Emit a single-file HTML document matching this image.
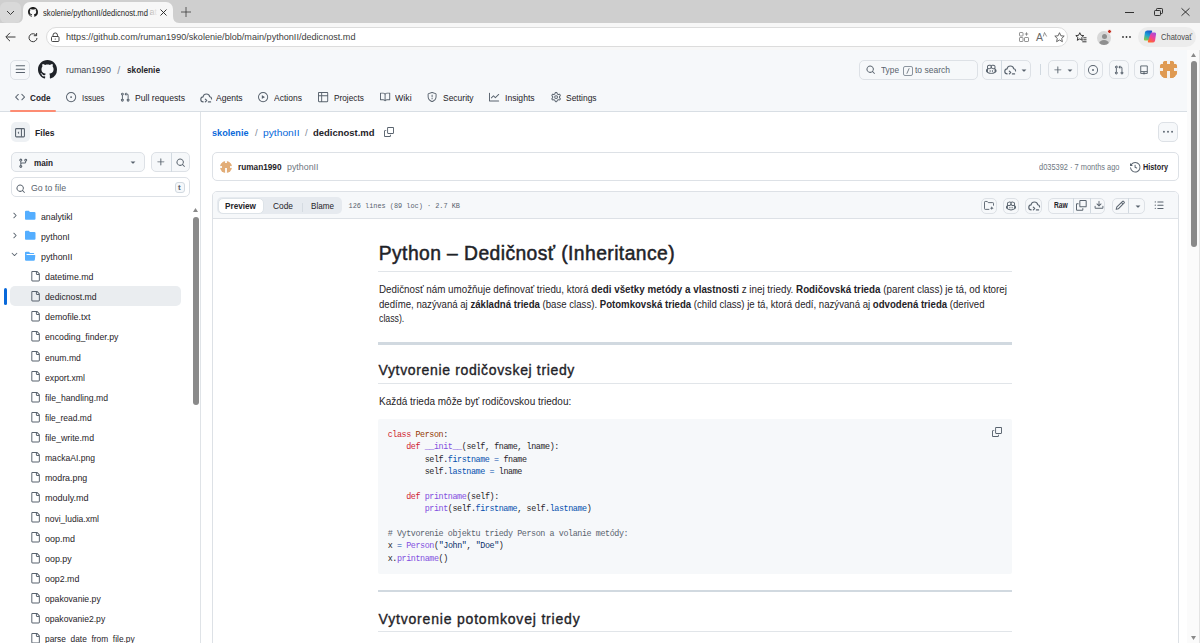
<!DOCTYPE html>
<html><head><meta charset="utf-8">
<style>
*{box-sizing:border-box;margin:0;padding:0}
html,body{width:1200px;height:643px;overflow:hidden;background:#fff;font-family:"Liberation Sans",sans-serif;color:#1f2328}
.a{position:absolute}
.t{position:absolute;white-space:nowrap;line-height:1}
svg{position:absolute;display:block;overflow:visible}
</style></head><body>

<div class="a" style="left:0px;top:0px;width:1200px;height:23px;background:#cfcfcf;"></div>
<div class="a" style="left:0px;top:2px;width:21px;height:21px;background:#d9d9d9;border-radius:6px;"></div>
<svg style="left:6px;top:9.5px" width="9" height="6"><path d="M1 1L4.5 4.5L8 1" stroke="#3a3a3a" stroke-width="1" fill="none"/></svg>
<div class="a" style="left:22.5px;top:2px;width:150px;height:24px;background:#f7f7f7;border-radius:0px;border-radius:7px 7px 0 0"></div>
<svg style="left:16.5px;top:16px" width="6" height="7"><path d="M6 7H0Q6 7 6 0Z" fill="#f7f7f7"/></svg>
<svg style="left:172.5px;top:16px" width="6" height="7"><path d="M0 0V7H6Q0 7 0 0Z" fill="#f7f7f7"/></svg>
<svg style="left:27.5px;top:7px" width="10" height="10" viewBox="0 0 16 16"><path d="M8 0C3.58 0 0 3.58 0 8c0 3.54 2.29 6.53 5.47 7.59.4.07.55-.17.55-.38 0-.19-.01-.82-.01-1.49-2.01.37-2.53-.49-2.69-.94-.09-.23-.48-.94-.82-1.13-.28-.15-.68-.52-.01-.53.63-.01 1.08.58 1.23.82.72 1.21 1.87.87 2.33.66.07-.52.28-.87.51-1.07-1.78-.2-3.64-.89-3.64-3.95 0-.87.31-1.59.82-2.15-.08-.2-.36-1.02.08-2.12 0 0 .67-.21 2.2.82.64-.18 1.32-.27 2-.27.68 0 1.36.09 2 .27 1.53-1.04 2.2-.82 2.2-.82.44 1.1.16 1.92.08 2.12.51.56.82 1.27.82 2.15 0 3.07-1.87 3.75-3.65 3.95.29.25.54.73.54 1.48 0 1.07-.01 1.93-.01 2.2 0 .21.15.46.55.38A8.013 8.013 0 0016 8c0-4.42-3.58-8-8-8z" fill="#1f1f1f"/></svg>
<div class="t" style="left:42.5px;top:7.84px;font-size:9.4px;font-weight:normal;color:#262626;letter-spacing:0.000px;font-family:'Liberation Sans';transform:scaleX(0.8156);transform-origin:0 0;">skolenie/pythonII/dedicnost.md</div>
<div class="t" style="left:149.5px;top:8.01px;font-size:9.2px;font-weight:normal;color:#b5b5b5;letter-spacing:0.000px;font-family:'Liberation Sans';">at</div>
<div class="a" style="left:151px;top:5px;width:7px;height:14px;background:linear-gradient(90deg,rgba(247,247,247,0),#f7f7f7);"></div>
<svg style="left:160px;top:9px" width="7" height="7"><path d="M0.5 0.5L6.5 6.5M6.5 0.5L0.5 6.5" stroke="#1f1f1f" stroke-width="0.9"/></svg>
<svg style="left:181px;top:7px" width="10" height="10"><path d="M5 0V10M0 5H10" stroke="#3a3a3a" stroke-width="0.8"/></svg>
<svg style="left:1125px;top:11.5px" width="9" height="1"><path d="M0 0.5H9" stroke="#1f1f1f" stroke-width="0.9"/></svg>
<svg style="left:1154px;top:8px" width="9" height="8"><rect x="0.5" y="2.5" width="6" height="5" rx="0.8" stroke="#1f1f1f" stroke-width="0.9" fill="none"/><path d="M2.5 2.2V1.3A0.8 0.8 0 0 1 3.3 0.5H7.7A0.8 0.8 0 0 1 8.5 1.3V4.7A0.8 0.8 0 0 1 7.7 5.5H6.8" stroke="#1f1f1f" stroke-width="0.9" fill="none"/></svg>
<svg style="left:1180.5px;top:8px" width="9" height="8"><path d="M0.5 0.3L8.5 7.7M8.5 0.3L0.5 7.7" stroke="#1f1f1f" stroke-width="0.9"/></svg>
<div class="a" style="left:0px;top:23px;width:1200px;height:27px;background:#f7f7f7;"></div>
<svg style="left:5px;top:32px" width="11" height="10"><path d="M10.5 5H1.2M5 0.8L0.8 5L5 9.2" stroke="#3a3a3a" stroke-width="1" fill="none"/></svg>
<svg style="left:28px;top:32.5px" width="10" height="10"><path d="M8.4 2.6A4 4 0 1 0 9 5" stroke="#3a3a3a" stroke-width="1" fill="none"/><path d="M5.8 2.7H8.6V0" stroke="#3a3a3a" stroke-width="1" fill="none"/></svg>
<div class="a" style="left:46px;top:27px;width:1022px;height:20px;background:#ffffff;border:1px solid #dcdcdc;border-radius:10px;"></div>
<svg style="left:51px;top:33px" width="9" height="9"><rect x="0.5" y="3.5" width="7.5" height="5" rx="1" stroke="#333" stroke-width="0.9" fill="none"/><path d="M2 3.5V2.2A2.2 2.2 0 0 1 6.5 2.2V3.5" stroke="#333" stroke-width="0.9" fill="none"/><circle cx="4.25" cy="6" r="0.6" fill="#333"/></svg>
<div class="t" style="left:65.5px;top:32.63px;font-size:9.3px;font-weight:normal;color:#404040;letter-spacing:0.000px;font-family:'Liberation Sans';transform:scaleX(0.9776);transform-origin:0 0;">https://github.com/ruman1990/skolenie/blob/main/pythonII/dedicnost.md</div>
<svg style="left:1019px;top:32px" width="10" height="10"><rect x="0.5" y="0.5" width="3.5" height="3.5" rx="0.6" stroke="#777" stroke-width="0.8" fill="none"/><rect x="0.5" y="5.5" width="3.5" height="4" rx="0.6" stroke="#777" stroke-width="0.8" fill="none"/><rect x="5.5" y="5.5" width="4" height="4" rx="0.6" stroke="#777" stroke-width="0.8" fill="none"/><path d="M7.5 0.3V3.7M5.8 2H9.2" stroke="#777" stroke-width="0.8"/></svg>
<div class="t" style="left:1036px;top:32.11px;font-size:10.5px;font-weight:normal;color:#6a6a6a;letter-spacing:0.000px;font-family:'Liberation Sans';">A</div>
<svg style="left:1043px;top:32px" width="4" height="5"><path d="M0.3 4.5L1.5 0.5L3.7 4.5" stroke="#6a6a6a" stroke-width="0.7" fill="none"/></svg>
<svg style="left:1054px;top:32px" width="11" height="11"><path d="M5.5 0.7L6.9 3.8L10.2 4.1L7.7 6.4L8.4 9.7L5.5 8L2.6 9.7L3.3 6.4L0.8 4.1L4.1 3.8Z" stroke="#555" stroke-width="0.9" fill="none" stroke-linejoin="round"/></svg>
<svg style="left:1075px;top:32px" width="12" height="11"><path d="M4.8 0.7L6 3.3L8.8 3.6L6.7 5.5L7.3 8.3L4.8 6.9L2.3 8.3L2.9 5.5L0.8 3.6L3.6 3.3Z" stroke="#222" stroke-width="0.9" fill="none" stroke-linejoin="round"/><path d="M8.3 5.8H11.5M8.3 7.8H11.5M7.3 9.8H11.5" stroke="#222" stroke-width="0.9"/></svg>
<div class="a" style="left:1097px;top:31px;width:14px;height:14px;border-radius:50%;background:#d8d8d8;overflow:hidden"><div class="a" style="left:4.5px;top:2.5px;width:5px;height:5px;border-radius:50%;background:#8f8f8f"></div><div class="a" style="left:2px;top:8.5px;width:10px;height:8px;border-radius:50%;background:#8f8f8f"></div></div>
<div class="a" style="left:1106.5px;top:28.8px;width:5.5px;height:5.5px;border-radius:50%;background:#c42b1c;border:0.6px solid #f7f7f7"></div>
<svg style="left:1122px;top:36px" width="9" height="2"><circle cx="1" cy="1" r="0.9" fill="#333"/><circle cx="4.5" cy="1" r="0.9" fill="#333"/><circle cx="8" cy="1" r="0.9" fill="#333"/></svg>
<div class="a" style="left:1138px;top:27px;width:58px;height:20px;background:#ececec;border-radius:10px;"></div>
<svg style="left:1143px;top:30px" width="14" height="13" viewBox="0 0 14 13.5"><defs><linearGradient id="cg1" x1="0.6" y1="0" x2="0.2" y2="1"><stop offset="0" stop-color="#1a56c8"/><stop offset="0.45" stop-color="#1aa0d8"/><stop offset="1" stop-color="#8ccf3c"/></linearGradient><linearGradient id="cg2" x1="0.8" y1="0" x2="0.3" y2="1"><stop offset="0" stop-color="#a24ee0"/><stop offset="0.5" stop-color="#f0409a"/><stop offset="1" stop-color="#ff6a28"/></linearGradient></defs><path d="M1.8 2.2Q2.4 0.5 4.2 0.5H8.3Q9.6 0.5 9.2 1.8L6.5 9.6Q6 11 4.6 11H2Q0.4 11 0.7 9.4Z" fill="url(#cg1)"/><path d="M12.2 11.3Q11.6 13 9.8 13H5.7Q4.4 13 4.8 11.7L7.5 3.9Q8 2.5 9.4 2.5H12Q13.6 2.5 13.3 4.1Z" fill="url(#cg2)"/></svg>
<div class="t" style="left:1161px;top:32.93px;font-size:9.3px;font-weight:normal;color:#4a4a4a;letter-spacing:0.000px;font-family:'Liberation Sans';transform:scaleX(0.8131);transform-origin:0 0;">Chatovať</div>
<div class="a" style="left:0px;top:50px;width:1187px;height:62px;background:#f6f8fa;border-bottom:1px solid #d8dee4"></div>
<div class="a" style="left:10px;top:59.5px;width:20px;height:20px;background:#f6f8fa;border:1px solid #dde1e6;border-radius:5px;"></div>
<svg style="left:14.6px;top:64.2px" width="10.8" height="10.8" viewBox="0 0 16 16"><path d="M1 2.75A.75.75 0 0 1 1.75 2h12.5a.75.75 0 0 1 0 1.5H1.75A.75.75 0 0 1 1 2.75Zm0 5A.75.75 0 0 1 1.75 7h12.5a.75.75 0 0 1 0 1.5H1.75A.75.75 0 0 1 1 7.75ZM1.75 12h12.5a.75.75 0 0 1 0 1.5H1.75a.75.75 0 0 1 0-1.5Z" fill="#59636e"/></svg>
<svg style="left:38.3px;top:60px" width="19" height="19" viewBox="0 0 16 16"><path d="M8 0C3.58 0 0 3.58 0 8c0 3.54 2.29 6.53 5.47 7.59.4.07.55-.17.55-.38 0-.19-.01-.82-.01-1.49-2.01.37-2.53-.49-2.69-.94-.09-.23-.48-.94-.82-1.13-.28-.15-.68-.52-.01-.53.63-.01 1.08.58 1.23.82.72 1.21 1.87.87 2.33.66.07-.52.28-.87.51-1.07-1.78-.2-3.64-.89-3.64-3.95 0-.87.31-1.59.82-2.15-.08-.2-.36-1.02.08-2.12 0 0 .67-.21 2.2.82.64-.18 1.32-.27 2-.27.68 0 1.36.09 2 .27 1.53-1.04 2.2-.82 2.2-.82.44 1.1.16 1.92.08 2.12.51.56.82 1.27.82 2.15 0 3.07-1.87 3.75-3.65 3.95.29.25.54.73.54 1.48 0 1.07-.01 1.93-.01 2.2 0 .21.15.46.55.38A8.013 8.013 0 0016 8c0-4.42-3.58-8-8-8z" fill="#1f2328"/></svg>
<div class="t" style="left:66.3px;top:65.06px;font-size:9.5px;font-weight:normal;color:#3d444d;letter-spacing:0.000px;font-family:'Liberation Sans';transform:scaleX(0.9363);transform-origin:0 0;">ruman1990</div>
<div class="t" style="left:117.3px;top:65.31px;font-size:10.5px;font-weight:normal;color:#818b98;letter-spacing:0.000px;font-family:'Liberation Sans';">/</div>
<div class="t" style="left:127px;top:65.06px;font-size:9.5px;font-weight:bold;color:#1f2328;letter-spacing:0.000px;font-family:'Liberation Sans';transform:scaleX(0.8677);transform-origin:0 0;">skolenie</div>
<div class="a" style="left:858.5px;top:59.5px;width:119.5px;height:20px;background:#f6f8fa;border:1px solid #dde1e6;border-radius:5px;"></div>
<svg style="left:866px;top:65px" width="9.5" height="9.5" viewBox="0 0 16 16"><path d="M10.68 11.74a6 6 0 0 1-7.922-8.982 6 6 0 0 1 8.982 7.922l3.04 3.04a.749.749 0 0 1-.326 1.275.749.749 0 0 1-.734-.215ZM11.5 7a4.499 4.499 0 1 0-8.997 0A4.499 4.499 0 0 0 11.5 7Z" fill="#59636e"/></svg>
<div class="t" style="left:881px;top:65.63px;font-size:9.3px;font-weight:normal;color:#59636e;letter-spacing:0.000px;font-family:'Liberation Sans';transform:scaleX(0.8930);transform-origin:0 0;">Type</div>
<div class="a" style="left:903px;top:65.8px;width:9.5px;height:10.2px;background:transparent;border:1px solid #8c959f;border-radius:2px;"></div>
<svg style="left:906px;top:68px" width="4" height="6"><path d="M3.2 0.3L0.8 5.7" stroke="#59636e" stroke-width="0.8"/></svg>
<div class="t" style="left:914.5px;top:65.63px;font-size:9.3px;font-weight:normal;color:#59636e;letter-spacing:0.000px;font-family:'Liberation Sans';transform:scaleX(0.9150);transform-origin:0 0;">to search</div>
<div class="a" style="left:982px;top:59.5px;width:49px;height:20px;background:#f6f8fa;border:1px solid #dde1e6;border-radius:5px;"></div>
<div class="a" style="left:1001px;top:60px;width:1px;height:19px;background:#d1d9e0;"></div>
<svg style="left:986px;top:64.2px" width="10.5" height="10.5" viewBox="0 0 16 16"><path d="M7.998 15.035c-4.562 0-7.873-2.914-7.998-3.749V9.338c.085-.628.677-1.686 1.588-2.065.013-.07.024-.143.036-.218.029-.183.06-.384.126-.612-.201-.508-.254-1.084-.254-1.656 0-.87.128-1.769.693-2.484.579-.733 1.494-1.124 2.724-1.261 1.206-.134 2.262.034 2.944.765.05.053.096.108.139.165.044-.057.094-.112.143-.165.682-.731 1.738-.899 2.944-.765 1.23.137 2.145.528 2.724 1.261.566.715.693 1.614.693 2.484 0 .572-.053 1.148-.254 1.656.066.228.098.429.126.612.012.076.024.148.037.218.924.385 1.522 1.471 1.591 2.095v1.872c0 .766-3.351 3.795-8.002 3.795Zm0-1.485c2.28 0 4.584-1.11 5.002-1.433V7.862l-.023-.116c-.49.21-1.075.291-1.727.291-1.146 0-2.059-.327-2.71-.991A3.222 3.222 0 0 1 8 6.303a3.24 3.24 0 0 1-.544.743c-.65.664-1.563.991-2.71.991-.652 0-1.236-.081-1.727-.291l-.023.116v4.255c.419.323 2.722 1.433 5.002 1.433ZM6.762 2.83c-.193-.206-.637-.413-1.682-.297-1.019.113-1.479.404-1.713.7-.247.312-.369.789-.369 1.554 0 .793.129 1.171.308 1.371.162.181.519.379 1.442.379.853 0 1.339-.235 1.638-.54.315-.322.527-.827.617-1.553.117-.935-.037-1.395-.241-1.614Zm4.155-.297c-1.044-.116-1.488.091-1.681.297-.204.219-.359.679-.242 1.614.091.726.303 1.231.618 1.553.299.305.784.54 1.638.54.922 0 1.28-.198 1.442-.379.179-.2.308-.578.308-1.371 0-.765-.123-1.242-.37-1.554-.233-.296-.693-.587-1.713-.7ZM6.25 9.037a.75.75 0 0 1 .75.75v1.501a.75.75 0 0 1-1.5 0V9.787a.75.75 0 0 1 .75-.75Zm4.25.75v1.501a.75.75 0 0 1-1.5 0V9.787a.75.75 0 0 1 1.5 0Z" fill="#59636e"/></svg>
<svg style="left:1004px;top:63.5px" width="12" height="12" viewBox="0 0 12 11"><path d="M3.2 9.3C1.6 9.3 0.8 8.1 0.8 6.9C0.8 5.5 1.8 4.5 3 4.4C3.4 2.6 4.8 1.5 6.4 1.5C8.2 1.5 9.4 2.7 9.8 4.3C10.9 4.4 11.6 5.3 11.6 6.5" stroke="#59636e" stroke-width="1.15" fill="none" stroke-linecap="round"/><path d="M5.3 6.6L6.7 8L5.3 9.4" stroke="#59636e" stroke-width="1.15" fill="none" stroke-linecap="round" stroke-linejoin="round"/><path d="M8.4 9.4H10.6" stroke="#59636e" stroke-width="1.15" stroke-linecap="round"/></svg>
<svg style="left:1018.5px;top:64.5px" width="10" height="10" viewBox="0 0 16 16"><path d="m4.427 7.427 3.396 3.396a.25.25 0 0 0 .354 0l3.396-3.396A.25.25 0 0 0 11.396 7H4.604a.25.25 0 0 0-.177.427Z" fill="#59636e"/></svg>
<div class="a" style="left:1039.5px;top:64px;width:1px;height:11px;background:#d1d9e0;"></div>
<div class="a" style="left:1047.5px;top:60px;width:30px;height:19px;background:#f6f8fa;border:1px solid #dde1e6;border-radius:5px;"></div>
<svg style="left:1052.5px;top:64.8px" width="10" height="10" viewBox="0 0 16 16"><path d="M7.75 2a.75.75 0 0 1 .75.75V7h4.25a.75.75 0 0 1 0 1.5H8.5v4.25a.75.75 0 0 1-1.5 0V8.5H2.75a.75.75 0 0 1 0-1.5H7V2.75A.75.75 0 0 1 7.75 2Z" fill="#59636e"/></svg>
<svg style="left:1064.5px;top:64.5px" width="10" height="10" viewBox="0 0 16 16"><path d="m4.427 7.427 3.396 3.396a.25.25 0 0 0 .354 0l3.396-3.396A.25.25 0 0 0 11.396 7H4.604a.25.25 0 0 0-.177.427Z" fill="#59636e"/></svg>
<div class="a" style="left:1083.5px;top:60px;width:19.5px;height:19px;background:#f6f8fa;border:1px solid #dde1e6;border-radius:5px;"></div>
<svg style="left:1088.2px;top:64.5px" width="10" height="10" viewBox="0 0 16 16"><path d="M8 9.5a1.5 1.5 0 1 0 0-3 1.5 1.5 0 0 0 0 3ZM8 0a8 8 0 1 1 0 16A8 8 0 0 1 8 0ZM1.5 8a6.5 6.5 0 1 0 13 0 6.5 6.5 0 0 0-13 0Z" fill="#59636e"/></svg>
<div class="a" style="left:1109px;top:60px;width:19.5px;height:19px;background:#f6f8fa;border:1px solid #dde1e6;border-radius:5px;"></div>
<svg style="left:1113.7px;top:64.5px" width="10" height="10" viewBox="0 0 16 16"><path d="M1.5 3.25a2.25 2.25 0 1 1 3 2.122v5.256a2.251 2.251 0 1 1-1.5 0V5.372A2.25 2.25 0 0 1 1.5 3.25Zm5.677-.177L9.573.677A.25.25 0 0 1 10 .854V2.5h1A2.5 2.5 0 0 1 13.5 5v5.628a2.251 2.251 0 1 1-1.5 0V5a1 1 0 0 0-1-1h-1v1.646a.25.25 0 0 1-.427.177L7.177 3.427a.25.25 0 0 1 0-.354ZM3.75 2.5a.75.75 0 1 0 0 1.5.75.75 0 0 0 0-1.5Zm0 9.5a.75.75 0 1 0 0 1.5.75.75 0 0 0 0-1.5Zm8.25.75a.75.75 0 1 0 1.5 0 .75.75 0 0 0-1.5 0Z" fill="#59636e"/></svg>
<div class="a" style="left:1134px;top:60px;width:19.5px;height:19px;background:#f6f8fa;border:1px solid #dde1e6;border-radius:5px;"></div>
<svg style="left:1139px;top:64.5px" width="10" height="10" viewBox="0 0 16 16"><path d="M2.75 1.5H13.25V13.5H2.75Z" stroke="#59636e" stroke-width="1.5" fill="none" stroke-linejoin="round"/><path d="M2.75 10.5H13.25" stroke="#59636e" stroke-width="1.5"/><path d="M6.3 12V15.2L8 14.2L9.7 15.2V12Z" fill="#59636e"/></svg>
<div class="a" style="left:1159px;top:60px;width:18.8px;height:18.8px;border-radius:50%;overflow:hidden;background:#f4f1ee"><div class="a" style="left:4.48px;top:1.20px;width:3.58px;height:3.58px;background:#df9a52"></div><div class="a" style="left:11.04px;top:1.20px;width:3.58px;height:3.58px;background:#df9a52"></div><div class="a" style="left:1.20px;top:4.48px;width:3.58px;height:3.58px;background:#df9a52"></div><div class="a" style="left:4.48px;top:4.48px;width:3.58px;height:3.58px;background:#df9a52"></div><div class="a" style="left:7.76px;top:4.48px;width:3.58px;height:3.58px;background:#df9a52"></div><div class="a" style="left:11.04px;top:4.48px;width:3.58px;height:3.58px;background:#df9a52"></div><div class="a" style="left:14.32px;top:4.48px;width:3.58px;height:3.58px;background:#df9a52"></div><div class="a" style="left:4.48px;top:7.76px;width:3.58px;height:3.58px;background:#df9a52"></div><div class="a" style="left:7.76px;top:7.76px;width:3.58px;height:3.58px;background:#df9a52"></div><div class="a" style="left:11.04px;top:7.76px;width:3.58px;height:3.58px;background:#df9a52"></div><div class="a" style="left:1.20px;top:11.04px;width:3.58px;height:3.58px;background:#df9a52"></div><div class="a" style="left:4.48px;top:11.04px;width:3.58px;height:3.58px;background:#df9a52"></div><div class="a" style="left:11.04px;top:11.04px;width:3.58px;height:3.58px;background:#df9a52"></div><div class="a" style="left:14.32px;top:11.04px;width:3.58px;height:3.58px;background:#df9a52"></div><div class="a" style="left:1.20px;top:14.32px;width:3.58px;height:3.58px;background:#df9a52"></div><div class="a" style="left:4.48px;top:14.32px;width:3.58px;height:3.58px;background:#df9a52"></div><div class="a" style="left:11.04px;top:14.32px;width:3.58px;height:3.58px;background:#df9a52"></div><div class="a" style="left:14.32px;top:14.32px;width:3.58px;height:3.58px;background:#df9a52"></div></div>
<svg style="left:14.8px;top:91.8px" width="10.2" height="10.2" viewBox="0 0 16 16"><path d="M4.72 3.22a.75.75 0 0 1 1.06 1.06L2.06 8l3.72 3.72a.75.75 0 1 1-1.06 1.06L.47 8.53a.75.75 0 0 1 0-1.06Zm6.56 0a.75.75 0 1 0-1.06 1.06L13.94 8l-3.72 3.72a.75.75 0 1 0 1.06 1.06l4.25-4.25a.75.75 0 0 0 0-1.06Z" fill="#59636e"/></svg>
<div class="t" style="left:30px;top:92.90px;font-size:9.8px;font-weight:bold;color:#1f2328;letter-spacing:0.000px;font-family:'Liberation Sans';transform:scaleX(0.8367);transform-origin:0 0;">Code</div>
<svg style="left:66px;top:91.8px" width="10.2" height="10.2" viewBox="0 0 16 16"><path d="M8 9.5a1.5 1.5 0 1 0 0-3 1.5 1.5 0 0 0 0 3ZM8 0a8 8 0 1 1 0 16A8 8 0 0 1 8 0ZM1.5 8a6.5 6.5 0 1 0 13 0 6.5 6.5 0 0 0-13 0Z" fill="#59636e"/></svg>
<div class="t" style="left:81.5px;top:92.90px;font-size:9.8px;font-weight:normal;color:#1f2328;letter-spacing:0.000px;font-family:'Liberation Sans';transform:scaleX(0.7943);transform-origin:0 0;">Issues</div>
<svg style="left:119.6px;top:91.8px" width="10.2" height="10.2" viewBox="0 0 16 16"><path d="M1.5 3.25a2.25 2.25 0 1 1 3 2.122v5.256a2.251 2.251 0 1 1-1.5 0V5.372A2.25 2.25 0 0 1 1.5 3.25Zm5.677-.177L9.573.677A.25.25 0 0 1 10 .854V2.5h1A2.5 2.5 0 0 1 13.5 5v5.628a2.251 2.251 0 1 1-1.5 0V5a1 1 0 0 0-1-1h-1v1.646a.25.25 0 0 1-.427.177L7.177 3.427a.25.25 0 0 1 0-.354ZM3.75 2.5a.75.75 0 1 0 0 1.5.75.75 0 0 0 0-1.5Zm0 9.5a.75.75 0 1 0 0 1.5.75.75 0 0 0 0-1.5Zm8.25.75a.75.75 0 1 0 1.5 0 .75.75 0 0 0-1.5 0Z" fill="#59636e"/></svg>
<div class="t" style="left:135px;top:92.90px;font-size:9.8px;font-weight:normal;color:#1f2328;letter-spacing:0.000px;font-family:'Liberation Sans';transform:scaleX(0.8828);transform-origin:0 0;">Pull requests</div>
<svg style="left:199.5px;top:91.5px" width="12" height="12" viewBox="0 0 12 11"><path d="M3.2 9.3C1.6 9.3 0.8 8.1 0.8 6.9C0.8 5.5 1.8 4.5 3 4.4C3.4 2.6 4.8 1.5 6.4 1.5C8.2 1.5 9.4 2.7 9.8 4.3C10.9 4.4 11.6 5.3 11.6 6.5" stroke="#59636e" stroke-width="1.15" fill="none" stroke-linecap="round"/><path d="M5.3 6.6L6.7 8L5.3 9.4" stroke="#59636e" stroke-width="1.15" fill="none" stroke-linecap="round" stroke-linejoin="round"/><path d="M8.4 9.4H10.6" stroke="#59636e" stroke-width="1.15" stroke-linecap="round"/></svg>
<div class="t" style="left:216.2px;top:92.90px;font-size:9.8px;font-weight:normal;color:#1f2328;letter-spacing:0.000px;font-family:'Liberation Sans';transform:scaleX(0.8717);transform-origin:0 0;">Agents</div>
<svg style="left:258px;top:91.8px" width="10.2" height="10.2" viewBox="0 0 16 16"><path d="M8 0a8 8 0 1 1 0 16A8 8 0 0 1 8 0ZM1.5 8a6.5 6.5 0 1 0 13 0 6.5 6.5 0 0 0-13 0Zm4.879-2.773 4.264 2.559a.25.25 0 0 1 0 .428l-4.264 2.559A.25.25 0 0 1 6 10.559V5.442a.25.25 0 0 1 .379-.215Z" fill="#59636e"/></svg>
<div class="t" style="left:274.3px;top:92.90px;font-size:9.8px;font-weight:normal;color:#1f2328;letter-spacing:0.000px;font-family:'Liberation Sans';transform:scaleX(0.8681);transform-origin:0 0;">Actions</div>
<svg style="left:317.8px;top:91.8px" width="10.2" height="10.2" viewBox="0 0 16 16"><path d="M0 1.75C0 .784.784 0 1.75 0h12.5C15.216 0 16 .784 16 1.75v12.5A1.75 1.75 0 0 1 14.25 16H1.75A1.75 1.75 0 0 1 0 14.25ZM6.5 6.5v8h7.75a.25.25 0 0 0 .25-.25V6.5Zm8-1.5V1.75a.25.25 0 0 0-.25-.25H6.5V5Zm-13 1.5v7.75c0 .138.112.25.25.25H5v-8ZM5 5V1.5H1.75a.25.25 0 0 0-.25.25V5Z" fill="#59636e"/></svg>
<div class="t" style="left:334px;top:92.90px;font-size:9.8px;font-weight:normal;color:#1f2328;letter-spacing:0.000px;font-family:'Liberation Sans';transform:scaleX(0.8420);transform-origin:0 0;">Projects</div>
<svg style="left:379.6px;top:91.8px" width="10.2" height="10.2" viewBox="0 0 16 16"><path d="M0 1.75A.75.75 0 0 1 .75 1h4.253c1.227 0 2.317.59 3 1.501A3.743 3.743 0 0 1 11.006 1h4.245a.75.75 0 0 1 .75.75v10.5a.75.75 0 0 1-.75.75h-4.507a2.25 2.25 0 0 0-1.591.659l-.622.621a.75.75 0 0 1-1.06 0l-.622-.621A2.25 2.25 0 0 0 5.258 13H.75a.75.75 0 0 1-.75-.75Zm7.251 10.324.004-5.073-.002-2.253A2.25 2.25 0 0 0 5.003 2.5H1.5v9h3.757a3.75 3.75 0 0 1 1.994.574ZM8.755 4.75l-.004 7.322a3.752 3.752 0 0 1 1.992-.572H14.5v-9h-3.495a2.25 2.25 0 0 0-2.25 2.25Z" fill="#59636e"/></svg>
<div class="t" style="left:395.4px;top:92.90px;font-size:9.8px;font-weight:normal;color:#1f2328;letter-spacing:0.000px;font-family:'Liberation Sans';transform:scaleX(0.8973);transform-origin:0 0;">Wiki</div>
<svg style="left:427.2px;top:91.8px" width="10.2" height="10.2" viewBox="0 0 16 16"><path d="M7.467.133a1.748 1.748 0 0 1 1.066 0l5.25 1.68A1.75 1.75 0 0 1 15 3.48V7c0 1.566-.32 3.182-1.303 4.682-.983 1.498-2.585 2.813-5.032 3.855a1.697 1.697 0 0 1-1.33 0c-2.447-1.042-4.049-2.357-5.032-3.855C1.32 10.182 1 8.566 1 7V3.48a1.755 1.755 0 0 1 1.217-1.667Zm.61 1.429a.25.25 0 0 0-.153 0l-5.25 1.68a.25.25 0 0 0-.174.238V7c0 1.358.275 2.666 1.057 3.86.784 1.194 2.121 2.34 4.366 3.297a.196.196 0 0 0 .154 0c2.245-.956 3.582-2.104 4.366-3.298C13.225 9.666 13.5 8.36 13.5 7V3.48a.251.251 0 0 0-.174-.237l-5.25-1.68ZM8.75 4.75v3a.75.75 0 0 1-1.5 0v-3a.75.75 0 0 1 1.5 0ZM9 10.5a1 1 0 1 1-2 0 1 1 0 0 1 2 0Z" fill="#59636e"/></svg>
<div class="t" style="left:443.4px;top:92.90px;font-size:9.8px;font-weight:normal;color:#1f2328;letter-spacing:0.000px;font-family:'Liberation Sans';transform:scaleX(0.8646);transform-origin:0 0;">Security</div>
<svg style="left:489px;top:91.8px" width="10.2" height="10.2" viewBox="0 0 16 16"><path d="M1.5 1.75V13.5h13.75a.75.75 0 0 1 0 1.5H.75a.75.75 0 0 1-.75-.75V1.75a.75.75 0 0 1 1.5 0Zm14.28 2.53-5.25 5.25a.75.75 0 0 1-1.06 0L7 7.06 4.28 9.78a.751.751 0 0 1-1.042-.018.751.751 0 0 1-.018-1.042l3.25-3.25a.75.75 0 0 1 1.06 0L10 7.94l4.72-4.72a.751.751 0 0 1 1.042.018.751.751 0 0 1 .018 1.042Z" fill="#59636e"/></svg>
<div class="t" style="left:505.4px;top:92.90px;font-size:9.8px;font-weight:normal;color:#1f2328;letter-spacing:0.000px;font-family:'Liberation Sans';transform:scaleX(0.8766);transform-origin:0 0;">Insights</div>
<svg style="left:551px;top:91.8px" width="10.2" height="10.2" viewBox="0 0 16 16"><path d="M8 0a8.2 8.2 0 0 1 .701.031C9.444.095 9.99.645 10.16 1.29l.288 1.107c.018.066.079.158.212.224.231.114.454.243.668.386.123.082.233.09.299.071l1.103-.303c.644-.176 1.392.021 1.82.63.27.385.506.792.704 1.218.315.675.111 1.422-.364 1.891l-.814.806c-.049.048-.098.147-.088.294.016.257.016.515 0 .772-.01.147.038.246.088.294l.814.806c.475.469.679 1.216.364 1.891a7.977 7.977 0 0 1-.704 1.217c-.428.61-1.176.807-1.82.63l-1.102-.302c-.067-.019-.177-.011-.3.071a5.909 5.909 0 0 1-.668.386c-.133.066-.194.158-.211.224l-.29 1.106c-.168.646-.715 1.196-1.458 1.26a8.006 8.006 0 0 1-1.402 0c-.743-.064-1.289-.614-1.458-1.26l-.289-1.106c-.018-.066-.079-.158-.212-.224a5.738 5.738 0 0 1-.668-.386c-.123-.082-.233-.09-.299-.071l-1.103.303c-.644.176-1.392-.021-1.82-.63a8.12 8.12 0 0 1-.704-1.218c-.315-.675-.111-1.422.363-1.891l.815-.806c.05-.048.098-.147.088-.294a6.214 6.214 0 0 1 0-.772c.01-.147-.038-.246-.088-.294l-.815-.806C.635 6.045.431 5.298.746 4.623a7.92 7.92 0 0 1 .704-1.217c.428-.61 1.176-.807 1.82-.63l1.102.302c.067.019.177.011.3-.071.214-.143.437-.272.668-.386.133-.066.194-.158.211-.224l.29-1.106C6.009.645 6.556.095 7.299.03 7.53.01 7.764 0 8 0Zm-.571 1.525c-.036.003-.108.036-.137.146l-.289 1.105c-.147.561-.549.967-.998 1.189-.173.086-.34.183-.5.29-.417.278-.97.423-1.529.27l-1.103-.303c-.109-.03-.175.016-.195.045-.22.312-.412.644-.573.99-.014.031-.021.11.059.19l.815.806c.411.406.562.957.53 1.456a4.709 4.709 0 0 0 0 .582c.032.499-.119 1.05-.53 1.456l-.815.806c-.081.08-.073.159-.059.19.162.346.353.677.573.989.02.03.085.076.195.046l1.102-.303c.56-.153 1.113-.008 1.53.27.161.107.328.204.501.29.447.222.85.629.997 1.189l.289 1.105c.029.109.101.143.137.146a6.6 6.6 0 0 0 1.142 0c.036-.003.108-.036.137-.146l.289-1.105c.147-.561.549-.967.998-1.189.173-.086.34-.183.5-.29.417-.278.97-.423 1.529-.27l1.103.303c.109.029.175-.016.195-.045.22-.313.411-.644.573-.99.014-.031.021-.11-.059-.19l-.815-.806c-.411-.406-.562-.957-.53-1.456a4.709 4.709 0 0 0 0-.582c-.032-.499.119-1.05.53-1.456l.815-.806c.081-.08.073-.159.059-.19a6.464 6.464 0 0 0-.573-.989c-.02-.03-.085-.076-.195-.046l-1.102.303c-.56.153-1.113.008-1.53-.27a4.44 4.44 0 0 0-.501-.29c-.447-.222-.85-.629-.997-1.189l-.289-1.105c-.029-.11-.101-.143-.137-.146a6.6 6.6 0 0 0-1.142 0ZM11 8a3 3 0 1 1-6 0 3 3 0 0 1 6 0ZM9.5 8a1.5 1.5 0 1 0-3.001.001A1.5 1.5 0 0 0 9.5 8Z" fill="#59636e"/></svg>
<div class="t" style="left:566.4px;top:92.90px;font-size:9.8px;font-weight:normal;color:#1f2328;letter-spacing:0.000px;font-family:'Liberation Sans';transform:scaleX(0.8643);transform-origin:0 0;">Settings</div>
<div class="a" style="left:10px;top:110.2px;width:46px;height:2px;background:#fd8c73;border-radius:1px"></div>
<div class="a" style="left:200px;top:112px;width:1px;height:531px;background:#dfe3e7;"></div>
<div class="a" style="left:10.5px;top:122px;width:19.5px;height:19.5px;background:#eef1f4;border-radius:5px;"></div>
<svg style="left:15px;top:127.5px" width="10" height="9.5" viewBox="0 0 16 15"><rect x="0.9" y="0.9" width="14.2" height="13.2" rx="1.3" stroke="#59636e" stroke-width="1.7" fill="none"/><path d="M10.3 1V14" stroke="#59636e" stroke-width="1.7"/><path d="M6.5 5.2V9.8L4.2 7.5Z" fill="#59636e"/></svg>
<div class="t" style="left:35.3px;top:127.80px;font-size:9.8px;font-weight:bold;color:#1f2328;letter-spacing:0.000px;font-family:'Liberation Sans';transform:scaleX(0.8778);transform-origin:0 0;">Files</div>
<div class="a" style="left:10.5px;top:152px;width:134.5px;height:20px;background:#f6f8fa;border:1px solid #dde1e6;border-radius:5px;"></div>
<svg style="left:18px;top:158.3px" width="10.5" height="10.5" viewBox="0 0 16 16"><path d="M9.5 3.25a2.25 2.25 0 1 1 3 2.122V6A2.5 2.5 0 0 1 10 8.5H6a1 1 0 0 0-1 1v1.128a2.251 2.251 0 1 1-1.5 0V5.372a2.25 2.25 0 1 1 1.5 0v1.836A2.493 2.493 0 0 1 6 7h4a1 1 0 0 0 1-1v-.628A2.25 2.25 0 0 1 9.5 3.25Zm-6 0a.75.75 0 1 0 1.5 0 .75.75 0 0 0-1.5 0Zm8.25-.75a.75.75 0 1 0 0 1.5.75.75 0 0 0 0-1.5ZM4.25 12a.75.75 0 1 0 0 1.5.75.75 0 0 0 0-1.5Z" fill="#59636e"/></svg>
<div class="t" style="left:33.5px;top:158.16px;font-size:9.5px;font-weight:bold;color:#1f2328;letter-spacing:0.000px;font-family:'Liberation Sans';transform:scaleX(0.8563);transform-origin:0 0;">main</div>
<svg style="left:127.5px;top:157px" width="10" height="10" viewBox="0 0 16 16"><path d="m4.427 7.427 3.396 3.396a.25.25 0 0 0 .354 0l3.396-3.396A.25.25 0 0 0 11.396 7H4.604a.25.25 0 0 0-.177.427Z" fill="#59636e"/></svg>
<div class="a" style="left:150.5px;top:152px;width:39.5px;height:20px;background:#f6f8fa;border:1px solid #dde1e6;border-radius:5px;"></div>
<div class="a" style="left:170.5px;top:152.5px;width:1px;height:19px;background:#d1d9e0;"></div>
<svg style="left:155.8px;top:157px" width="10" height="10" viewBox="0 0 16 16"><path d="M7.75 2a.75.75 0 0 1 .75.75V7h4.25a.75.75 0 0 1 0 1.5H8.5v4.25a.75.75 0 0 1-1.5 0V8.5H2.75a.75.75 0 0 1 0-1.5H7V2.75A.75.75 0 0 1 7.75 2Z" fill="#59636e"/></svg>
<svg style="left:176px;top:157.5px" width="9.5" height="9.5" viewBox="0 0 16 16"><path d="M10.68 11.74a6 6 0 0 1-7.922-8.982 6 6 0 0 1 8.982 7.922l3.04 3.04a.749.749 0 0 1-.326 1.275.749.749 0 0 1-.734-.215ZM11.5 7a4.499 4.499 0 1 0-8.997 0A4.499 4.499 0 0 0 11.5 7Z" fill="#59636e"/></svg>
<div class="a" style="left:10.5px;top:177.3px;width:179.5px;height:20px;background:#ffffff;border:1px solid #dde1e6;border-radius:5px;"></div>
<svg style="left:16px;top:184px" width="9.5" height="9.5" viewBox="0 0 16 16"><path d="M10.68 11.74a6 6 0 0 1-7.922-8.982 6 6 0 0 1 8.982 7.922l3.04 3.04a.749.749 0 0 1-.326 1.275.749.749 0 0 1-.734-.215ZM11.5 7a4.499 4.499 0 1 0-8.997 0A4.499 4.499 0 0 0 11.5 7Z" fill="#59636e"/></svg>
<div class="t" style="left:31px;top:182.76px;font-size:9.5px;font-weight:normal;color:#59636e;letter-spacing:0.000px;font-family:'Liberation Sans';transform:scaleX(0.9203);transform-origin:0 0;">Go to file</div>
<div class="a" style="left:175px;top:182px;width:9.5px;height:11px;background:#f6f8fa;border:1px solid #d1d9e0;border-radius:3px;"></div>
<div class="t" style="left:178px;top:183.53px;font-size:8px;font-weight:bold;color:#59636e;letter-spacing:0.000px;font-family:'Liberation Sans';">t</div>
<div class="a" style="left:192.5px;top:217px;width:6px;height:188px;background:#8a8a8a;border-radius:3px"></div>
<svg style="left:193px;top:208px" width="5" height="4"><path d="M0 4H5L2.5 0Z" fill="#8a8a8a"/></svg>
<div class="a" style="left:10px;top:286.1px;width:171px;height:20px;background:#eaedf0;border-radius:5px;"></div>
<div class="a" style="left:4px;top:287.6px;width:2.5px;height:17px;background:#0969da;border-radius:2px"></div>
<svg style="left:9.8px;top:211.1px" width="9" height="9" viewBox="0 0 16 16"><path d="M6.22 3.22a.75.75 0 0 1 1.06 0l4.25 4.25a.75.75 0 0 1 0 1.06l-4.25 4.25a.751.751 0 0 1-1.042-.018.751.751 0 0 1-.018-1.042L9.94 8 6.22 4.28a.75.75 0 0 1 0-1.06Z" fill="#59636e"/></svg>
<svg style="left:25px;top:210.29999999999998px" width="10.5" height="10.5" viewBox="0 0 16 16"><path d="M1.75 1A1.75 1.75 0 0 0 0 2.75v10.5C0 14.216.784 15 1.75 15h12.5A1.75 1.75 0 0 0 16 13.25v-8.5A1.75 1.75 0 0 0 14.25 3H7.5a.25.25 0 0 1-.2-.1l-.9-1.2C6.07 1.26 5.55 1 5 1H1.75Z" fill="#54aeff"/></svg>
<div class="t" style="left:40.5px;top:211.77px;font-size:9.6px;font-weight:normal;color:#1f2328;letter-spacing:0.000px;font-family:'Liberation Sans';transform:scaleX(0.9085);transform-origin:0 0;">analytikl</div>
<svg style="left:9.8px;top:231.22px" width="9" height="9" viewBox="0 0 16 16"><path d="M6.22 3.22a.75.75 0 0 1 1.06 0l4.25 4.25a.75.75 0 0 1 0 1.06l-4.25 4.25a.751.751 0 0 1-1.042-.018.751.751 0 0 1-.018-1.042L9.94 8 6.22 4.28a.75.75 0 0 1 0-1.06Z" fill="#59636e"/></svg>
<svg style="left:25px;top:230.42px" width="10.5" height="10.5" viewBox="0 0 16 16"><path d="M1.75 1A1.75 1.75 0 0 0 0 2.75v10.5C0 14.216.784 15 1.75 15h12.5A1.75 1.75 0 0 0 16 13.25v-8.5A1.75 1.75 0 0 0 14.25 3H7.5a.25.25 0 0 1-.2-.1l-.9-1.2C6.07 1.26 5.55 1 5 1H1.75Z" fill="#54aeff"/></svg>
<div class="t" style="left:40.5px;top:231.89px;font-size:9.6px;font-weight:normal;color:#1f2328;letter-spacing:0.000px;font-family:'Liberation Sans';transform:scaleX(0.9116);transform-origin:0 0;">pythonI</div>
<svg style="left:10.2px;top:250.24px" width="9" height="9" viewBox="0 0 16 16"><path d="M12.78 5.22a.749.749 0 0 1 0 1.06l-4.25 4.25a.749.749 0 0 1-1.06 0L3.22 6.28a.749.749 0 0 1 .326-1.275.749.749 0 0 1 .734.215L8 8.94l3.72-3.72a.749.749 0 0 1 1.06 0Z" fill="#59636e"/></svg>
<svg style="left:25px;top:250.54px" width="10.5" height="10.5" viewBox="0 0 16 16"><path d="M.513 1.513A1.75 1.75 0 0 1 1.75 1h3.5c.55 0 1.07.26 1.4.7l.9 1.2a.25.25 0 0 0 .2.1H13a1 1 0 0 1 1 1v.5H2.75a.75.75 0 0 0 0 1.5h11.978a1 1 0 0 1 .994 1.117L15 13.25A1.75 1.75 0 0 1 13.25 15H1.75A1.75 1.75 0 0 1 0 13.25V2.75c0-.464.184-.91.513-1.237Z" fill="#54aeff"/></svg>
<div class="t" style="left:40.5px;top:252.01px;font-size:9.6px;font-weight:normal;color:#1f2328;letter-spacing:0.000px;font-family:'Liberation Sans';transform:scaleX(0.9197);transform-origin:0 0;">pythonII</div>
<svg style="left:29.9px;top:270.85999999999996px" width="10.5" height="10.5" viewBox="0 0 16 16"><path d="M2 1.75C2 .784 2.784 0 3.75 0h6.586c.464 0 .909.184 1.237.513l2.914 2.914c.329.328.513.773.513 1.237v9.586A1.75 1.75 0 0 1 13.25 16h-9.5A1.75 1.75 0 0 1 2 14.25Zm1.75-.25a.25.25 0 0 0-.25.25v12.5c0 .138.112.25.25.25h9.5a.25.25 0 0 0 .25-.25V6h-2.75A1.75 1.75 0 0 1 9 4.25V1.5Zm6.75.062V4.25c0 .138.112.25.25.25h2.688l-.011-.013-2.914-2.914-.013-.011Z" fill="#59636e"/></svg>
<div class="t" style="left:45.3px;top:272.13px;font-size:9.6px;font-weight:normal;color:#1f2328;letter-spacing:0.000px;font-family:'Liberation Sans';transform:scaleX(0.9186);transform-origin:0 0;">datetime.md</div>
<svg style="left:29.9px;top:290.97999999999996px" width="10.5" height="10.5" viewBox="0 0 16 16"><path d="M2 1.75C2 .784 2.784 0 3.75 0h6.586c.464 0 .909.184 1.237.513l2.914 2.914c.329.328.513.773.513 1.237v9.586A1.75 1.75 0 0 1 13.25 16h-9.5A1.75 1.75 0 0 1 2 14.25Zm1.75-.25a.25.25 0 0 0-.25.25v12.5c0 .138.112.25.25.25h9.5a.25.25 0 0 0 .25-.25V6h-2.75A1.75 1.75 0 0 1 9 4.25V1.5Zm6.75.062V4.25c0 .138.112.25.25.25h2.688l-.011-.013-2.914-2.914-.013-.011Z" fill="#59636e"/></svg>
<div class="t" style="left:45.3px;top:292.25px;font-size:9.6px;font-weight:normal;color:#1f2328;letter-spacing:0.000px;font-family:'Liberation Sans';transform:scaleX(0.9043);transform-origin:0 0;">dedicnost.md</div>
<svg style="left:29.9px;top:311.09999999999997px" width="10.5" height="10.5" viewBox="0 0 16 16"><path d="M2 1.75C2 .784 2.784 0 3.75 0h6.586c.464 0 .909.184 1.237.513l2.914 2.914c.329.328.513.773.513 1.237v9.586A1.75 1.75 0 0 1 13.25 16h-9.5A1.75 1.75 0 0 1 2 14.25Zm1.75-.25a.25.25 0 0 0-.25.25v12.5c0 .138.112.25.25.25h9.5a.25.25 0 0 0 .25-.25V6h-2.75A1.75 1.75 0 0 1 9 4.25V1.5Zm6.75.062V4.25c0 .138.112.25.25.25h2.688l-.011-.013-2.914-2.914-.013-.011Z" fill="#59636e"/></svg>
<div class="t" style="left:45.3px;top:312.37px;font-size:9.6px;font-weight:normal;color:#1f2328;letter-spacing:0.000px;font-family:'Liberation Sans';transform:scaleX(0.9254);transform-origin:0 0;">demofile.txt</div>
<svg style="left:29.9px;top:331.21999999999997px" width="10.5" height="10.5" viewBox="0 0 16 16"><path d="M2 1.75C2 .784 2.784 0 3.75 0h6.586c.464 0 .909.184 1.237.513l2.914 2.914c.329.328.513.773.513 1.237v9.586A1.75 1.75 0 0 1 13.25 16h-9.5A1.75 1.75 0 0 1 2 14.25Zm1.75-.25a.25.25 0 0 0-.25.25v12.5c0 .138.112.25.25.25h9.5a.25.25 0 0 0 .25-.25V6h-2.75A1.75 1.75 0 0 1 9 4.25V1.5Zm6.75.062V4.25c0 .138.112.25.25.25h2.688l-.011-.013-2.914-2.914-.013-.011Z" fill="#59636e"/></svg>
<div class="t" style="left:45.3px;top:332.49px;font-size:9.6px;font-weight:normal;color:#1f2328;letter-spacing:0.000px;font-family:'Liberation Sans';transform:scaleX(0.9113);transform-origin:0 0;">encoding_finder.py</div>
<svg style="left:29.9px;top:351.34px" width="10.5" height="10.5" viewBox="0 0 16 16"><path d="M2 1.75C2 .784 2.784 0 3.75 0h6.586c.464 0 .909.184 1.237.513l2.914 2.914c.329.328.513.773.513 1.237v9.586A1.75 1.75 0 0 1 13.25 16h-9.5A1.75 1.75 0 0 1 2 14.25Zm1.75-.25a.25.25 0 0 0-.25.25v12.5c0 .138.112.25.25.25h9.5a.25.25 0 0 0 .25-.25V6h-2.75A1.75 1.75 0 0 1 9 4.25V1.5Zm6.75.062V4.25c0 .138.112.25.25.25h2.688l-.011-.013-2.914-2.914-.013-.011Z" fill="#59636e"/></svg>
<div class="t" style="left:45.3px;top:352.61px;font-size:9.6px;font-weight:normal;color:#1f2328;letter-spacing:0.000px;font-family:'Liberation Sans';transform:scaleX(0.8975);transform-origin:0 0;">enum.md</div>
<svg style="left:29.9px;top:371.46px" width="10.5" height="10.5" viewBox="0 0 16 16"><path d="M2 1.75C2 .784 2.784 0 3.75 0h6.586c.464 0 .909.184 1.237.513l2.914 2.914c.329.328.513.773.513 1.237v9.586A1.75 1.75 0 0 1 13.25 16h-9.5A1.75 1.75 0 0 1 2 14.25Zm1.75-.25a.25.25 0 0 0-.25.25v12.5c0 .138.112.25.25.25h9.5a.25.25 0 0 0 .25-.25V6h-2.75A1.75 1.75 0 0 1 9 4.25V1.5Zm6.75.062V4.25c0 .138.112.25.25.25h2.688l-.011-.013-2.914-2.914-.013-.011Z" fill="#59636e"/></svg>
<div class="t" style="left:45.3px;top:372.73px;font-size:9.6px;font-weight:normal;color:#1f2328;letter-spacing:0.000px;font-family:'Liberation Sans';transform:scaleX(0.9040);transform-origin:0 0;">export.xml</div>
<svg style="left:29.9px;top:391.58px" width="10.5" height="10.5" viewBox="0 0 16 16"><path d="M2 1.75C2 .784 2.784 0 3.75 0h6.586c.464 0 .909.184 1.237.513l2.914 2.914c.329.328.513.773.513 1.237v9.586A1.75 1.75 0 0 1 13.25 16h-9.5A1.75 1.75 0 0 1 2 14.25Zm1.75-.25a.25.25 0 0 0-.25.25v12.5c0 .138.112.25.25.25h9.5a.25.25 0 0 0 .25-.25V6h-2.75A1.75 1.75 0 0 1 9 4.25V1.5Zm6.75.062V4.25c0 .138.112.25.25.25h2.688l-.011-.013-2.914-2.914-.013-.011Z" fill="#59636e"/></svg>
<div class="t" style="left:45.3px;top:392.85px;font-size:9.6px;font-weight:normal;color:#1f2328;letter-spacing:0.000px;font-family:'Liberation Sans';transform:scaleX(0.9030);transform-origin:0 0;">file_handling.md</div>
<svg style="left:29.9px;top:411.7px" width="10.5" height="10.5" viewBox="0 0 16 16"><path d="M2 1.75C2 .784 2.784 0 3.75 0h6.586c.464 0 .909.184 1.237.513l2.914 2.914c.329.328.513.773.513 1.237v9.586A1.75 1.75 0 0 1 13.25 16h-9.5A1.75 1.75 0 0 1 2 14.25Zm1.75-.25a.25.25 0 0 0-.25.25v12.5c0 .138.112.25.25.25h9.5a.25.25 0 0 0 .25-.25V6h-2.75A1.75 1.75 0 0 1 9 4.25V1.5Zm6.75.062V4.25c0 .138.112.25.25.25h2.688l-.011-.013-2.914-2.914-.013-.011Z" fill="#59636e"/></svg>
<div class="t" style="left:45.3px;top:412.97px;font-size:9.6px;font-weight:normal;color:#1f2328;letter-spacing:0.000px;font-family:'Liberation Sans';transform:scaleX(0.8826);transform-origin:0 0;">file_read.md</div>
<svg style="left:29.9px;top:431.82px" width="10.5" height="10.5" viewBox="0 0 16 16"><path d="M2 1.75C2 .784 2.784 0 3.75 0h6.586c.464 0 .909.184 1.237.513l2.914 2.914c.329.328.513.773.513 1.237v9.586A1.75 1.75 0 0 1 13.25 16h-9.5A1.75 1.75 0 0 1 2 14.25Zm1.75-.25a.25.25 0 0 0-.25.25v12.5c0 .138.112.25.25.25h9.5a.25.25 0 0 0 .25-.25V6h-2.75A1.75 1.75 0 0 1 9 4.25V1.5Zm6.75.062V4.25c0 .138.112.25.25.25h2.688l-.011-.013-2.914-2.914-.013-.011Z" fill="#59636e"/></svg>
<div class="t" style="left:45.3px;top:433.09px;font-size:9.6px;font-weight:normal;color:#1f2328;letter-spacing:0.000px;font-family:'Liberation Sans';transform:scaleX(0.9098);transform-origin:0 0;">file_write.md</div>
<svg style="left:29.9px;top:451.93999999999994px" width="10.5" height="10.5" viewBox="0 0 16 16"><path d="M2 1.75C2 .784 2.784 0 3.75 0h6.586c.464 0 .909.184 1.237.513l2.914 2.914c.329.328.513.773.513 1.237v9.586A1.75 1.75 0 0 1 13.25 16h-9.5A1.75 1.75 0 0 1 2 14.25Zm1.75-.25a.25.25 0 0 0-.25.25v12.5c0 .138.112.25.25.25h9.5a.25.25 0 0 0 .25-.25V6h-2.75A1.75 1.75 0 0 1 9 4.25V1.5Zm6.75.062V4.25c0 .138.112.25.25.25h2.688l-.011-.013-2.914-2.914-.013-.011Z" fill="#59636e"/></svg>
<div class="t" style="left:45.3px;top:453.21px;font-size:9.6px;font-weight:normal;color:#1f2328;letter-spacing:0.000px;font-family:'Liberation Sans';transform:scaleX(0.8911);transform-origin:0 0;">mackaAI.png</div>
<svg style="left:29.9px;top:472.05999999999995px" width="10.5" height="10.5" viewBox="0 0 16 16"><path d="M2 1.75C2 .784 2.784 0 3.75 0h6.586c.464 0 .909.184 1.237.513l2.914 2.914c.329.328.513.773.513 1.237v9.586A1.75 1.75 0 0 1 13.25 16h-9.5A1.75 1.75 0 0 1 2 14.25Zm1.75-.25a.25.25 0 0 0-.25.25v12.5c0 .138.112.25.25.25h9.5a.25.25 0 0 0 .25-.25V6h-2.75A1.75 1.75 0 0 1 9 4.25V1.5Zm6.75.062V4.25c0 .138.112.25.25.25h2.688l-.011-.013-2.914-2.914-.013-.011Z" fill="#59636e"/></svg>
<div class="t" style="left:45.3px;top:473.33px;font-size:9.6px;font-weight:normal;color:#1f2328;letter-spacing:0.000px;font-family:'Liberation Sans';transform:scaleX(0.9199);transform-origin:0 0;">modra.png</div>
<svg style="left:29.9px;top:492.17999999999995px" width="10.5" height="10.5" viewBox="0 0 16 16"><path d="M2 1.75C2 .784 2.784 0 3.75 0h6.586c.464 0 .909.184 1.237.513l2.914 2.914c.329.328.513.773.513 1.237v9.586A1.75 1.75 0 0 1 13.25 16h-9.5A1.75 1.75 0 0 1 2 14.25Zm1.75-.25a.25.25 0 0 0-.25.25v12.5c0 .138.112.25.25.25h9.5a.25.25 0 0 0 .25-.25V6h-2.75A1.75 1.75 0 0 1 9 4.25V1.5Zm6.75.062V4.25c0 .138.112.25.25.25h2.688l-.011-.013-2.914-2.914-.013-.011Z" fill="#59636e"/></svg>
<div class="t" style="left:45.3px;top:493.45px;font-size:9.6px;font-weight:normal;color:#1f2328;letter-spacing:0.000px;font-family:'Liberation Sans';transform:scaleX(0.9433);transform-origin:0 0;">moduly.md</div>
<svg style="left:29.9px;top:512.3px" width="10.5" height="10.5" viewBox="0 0 16 16"><path d="M2 1.75C2 .784 2.784 0 3.75 0h6.586c.464 0 .909.184 1.237.513l2.914 2.914c.329.328.513.773.513 1.237v9.586A1.75 1.75 0 0 1 13.25 16h-9.5A1.75 1.75 0 0 1 2 14.25Zm1.75-.25a.25.25 0 0 0-.25.25v12.5c0 .138.112.25.25.25h9.5a.25.25 0 0 0 .25-.25V6h-2.75A1.75 1.75 0 0 1 9 4.25V1.5Zm6.75.062V4.25c0 .138.112.25.25.25h2.688l-.011-.013-2.914-2.914-.013-.011Z" fill="#59636e"/></svg>
<div class="t" style="left:45.3px;top:513.57px;font-size:9.6px;font-weight:normal;color:#1f2328;letter-spacing:0.000px;font-family:'Liberation Sans';transform:scaleX(0.8866);transform-origin:0 0;">novi_ludia.xml</div>
<svg style="left:29.9px;top:532.42px" width="10.5" height="10.5" viewBox="0 0 16 16"><path d="M2 1.75C2 .784 2.784 0 3.75 0h6.586c.464 0 .909.184 1.237.513l2.914 2.914c.329.328.513.773.513 1.237v9.586A1.75 1.75 0 0 1 13.25 16h-9.5A1.75 1.75 0 0 1 2 14.25Zm1.75-.25a.25.25 0 0 0-.25.25v12.5c0 .138.112.25.25.25h9.5a.25.25 0 0 0 .25-.25V6h-2.75A1.75 1.75 0 0 1 9 4.25V1.5Zm6.75.062V4.25c0 .138.112.25.25.25h2.688l-.011-.013-2.914-2.914-.013-.011Z" fill="#59636e"/></svg>
<div class="t" style="left:45.3px;top:533.69px;font-size:9.6px;font-weight:normal;color:#1f2328;letter-spacing:0.000px;font-family:'Liberation Sans';transform:scaleX(0.9375);transform-origin:0 0;">oop.md</div>
<svg style="left:29.9px;top:552.54px" width="10.5" height="10.5" viewBox="0 0 16 16"><path d="M2 1.75C2 .784 2.784 0 3.75 0h6.586c.464 0 .909.184 1.237.513l2.914 2.914c.329.328.513.773.513 1.237v9.586A1.75 1.75 0 0 1 13.25 16h-9.5A1.75 1.75 0 0 1 2 14.25Zm1.75-.25a.25.25 0 0 0-.25.25v12.5c0 .138.112.25.25.25h9.5a.25.25 0 0 0 .25-.25V6h-2.75A1.75 1.75 0 0 1 9 4.25V1.5Zm6.75.062V4.25c0 .138.112.25.25.25h2.688l-.011-.013-2.914-2.914-.013-.011Z" fill="#59636e"/></svg>
<div class="t" style="left:45.3px;top:553.81px;font-size:9.6px;font-weight:normal;color:#1f2328;letter-spacing:0.000px;font-family:'Liberation Sans';transform:scaleX(0.9267);transform-origin:0 0;">oop.py</div>
<svg style="left:29.9px;top:572.66px" width="10.5" height="10.5" viewBox="0 0 16 16"><path d="M2 1.75C2 .784 2.784 0 3.75 0h6.586c.464 0 .909.184 1.237.513l2.914 2.914c.329.328.513.773.513 1.237v9.586A1.75 1.75 0 0 1 13.25 16h-9.5A1.75 1.75 0 0 1 2 14.25Zm1.75-.25a.25.25 0 0 0-.25.25v12.5c0 .138.112.25.25.25h9.5a.25.25 0 0 0 .25-.25V6h-2.75A1.75 1.75 0 0 1 9 4.25V1.5Zm6.75.062V4.25c0 .138.112.25.25.25h2.688l-.011-.013-2.914-2.914-.013-.011Z" fill="#59636e"/></svg>
<div class="t" style="left:45.3px;top:573.93px;font-size:9.6px;font-weight:normal;color:#1f2328;letter-spacing:0.000px;font-family:'Liberation Sans';transform:scaleX(0.9212);transform-origin:0 0;">oop2.md</div>
<svg style="left:29.9px;top:592.78px" width="10.5" height="10.5" viewBox="0 0 16 16"><path d="M2 1.75C2 .784 2.784 0 3.75 0h6.586c.464 0 .909.184 1.237.513l2.914 2.914c.329.328.513.773.513 1.237v9.586A1.75 1.75 0 0 1 13.25 16h-9.5A1.75 1.75 0 0 1 2 14.25Zm1.75-.25a.25.25 0 0 0-.25.25v12.5c0 .138.112.25.25.25h9.5a.25.25 0 0 0 .25-.25V6h-2.75A1.75 1.75 0 0 1 9 4.25V1.5Zm6.75.062V4.25c0 .138.112.25.25.25h2.688l-.011-.013-2.914-2.914-.013-.011Z" fill="#59636e"/></svg>
<div class="t" style="left:45.3px;top:594.05px;font-size:9.6px;font-weight:normal;color:#1f2328;letter-spacing:0.000px;font-family:'Liberation Sans';transform:scaleX(0.9002);transform-origin:0 0;">opakovanie.py</div>
<svg style="left:29.9px;top:612.9px" width="10.5" height="10.5" viewBox="0 0 16 16"><path d="M2 1.75C2 .784 2.784 0 3.75 0h6.586c.464 0 .909.184 1.237.513l2.914 2.914c.329.328.513.773.513 1.237v9.586A1.75 1.75 0 0 1 13.25 16h-9.5A1.75 1.75 0 0 1 2 14.25Zm1.75-.25a.25.25 0 0 0-.25.25v12.5c0 .138.112.25.25.25h9.5a.25.25 0 0 0 .25-.25V6h-2.75A1.75 1.75 0 0 1 9 4.25V1.5Zm6.75.062V4.25c0 .138.112.25.25.25h2.688l-.011-.013-2.914-2.914-.013-.011Z" fill="#59636e"/></svg>
<div class="t" style="left:45.3px;top:614.17px;font-size:9.6px;font-weight:normal;color:#1f2328;letter-spacing:0.000px;font-family:'Liberation Sans';transform:scaleX(0.8956);transform-origin:0 0;">opakovanie2.py</div>
<svg style="left:29.9px;top:633.02px" width="10.5" height="10.5" viewBox="0 0 16 16"><path d="M2 1.75C2 .784 2.784 0 3.75 0h6.586c.464 0 .909.184 1.237.513l2.914 2.914c.329.328.513.773.513 1.237v9.586A1.75 1.75 0 0 1 13.25 16h-9.5A1.75 1.75 0 0 1 2 14.25Zm1.75-.25a.25.25 0 0 0-.25.25v12.5c0 .138.112.25.25.25h9.5a.25.25 0 0 0 .25-.25V6h-2.75A1.75 1.75 0 0 1 9 4.25V1.5Zm6.75.062V4.25c0 .138.112.25.25.25h2.688l-.011-.013-2.914-2.914-.013-.011Z" fill="#59636e"/></svg>
<div class="t" style="left:45.3px;top:634.29px;font-size:9.6px;font-weight:normal;color:#1f2328;letter-spacing:0.000px;font-family:'Liberation Sans';transform:scaleX(0.8714);transform-origin:0 0;">parse_date_from_file.py</div>
<div class="t" style="left:211.5px;top:127.87px;font-size:9.6px;font-weight:bold;color:#0969da;letter-spacing:0.000px;font-family:'Liberation Sans';transform:scaleX(0.9504);transform-origin:0 0;">skolenie</div>
<div class="t" style="left:255px;top:127.87px;font-size:9.6px;font-weight:normal;color:#818b98;letter-spacing:0.000px;font-family:'Liberation Sans';">/</div>
<div class="t" style="left:262.5px;top:127.87px;font-size:9.6px;font-weight:normal;color:#0969da;letter-spacing:0.000px;font-family:'Liberation Sans';transform:scaleX(1.0691);transform-origin:0 0;">pythonII</div>
<div class="t" style="left:305px;top:127.87px;font-size:9.6px;font-weight:normal;color:#818b98;letter-spacing:0.000px;font-family:'Liberation Sans';">/</div>
<div class="t" style="left:313px;top:127.87px;font-size:9.6px;font-weight:bold;color:#1f2328;letter-spacing:0.000px;font-family:'Liberation Sans';transform:scaleX(0.9860);transform-origin:0 0;">dedicnost.md</div>
<svg style="left:383.5px;top:127px" width="10" height="10" viewBox="0 0 16 16"><path d="M0 6.75C0 5.784.784 5 1.75 5h1.5a.75.75 0 0 1 0 1.5h-1.5a.25.25 0 0 0-.25.25v7.5c0 .138.112.25.25.25h7.5a.25.25 0 0 0 .25-.25v-1.5a.75.75 0 0 1 1.5 0v1.5A1.75 1.75 0 0 1 9.25 16h-7.5A1.75 1.75 0 0 1 0 14.25ZM5 1.75C5 .784 5.784 0 6.75 0h7.5C15.216 0 16 .784 16 1.75v7.5A1.75 1.75 0 0 1 14.25 11h-7.5A1.75 1.75 0 0 1 5 9.25Zm1.75-.25a.25.25 0 0 0-.25.25v7.5c0 .138.112.25.25.25h7.5a.25.25 0 0 0 .25-.25v-7.5a.25.25 0 0 0-.25-.25Z" fill="#59636e"/></svg>
<div class="a" style="left:1158px;top:122px;width:20px;height:20px;background:#f6f8fa;border:1px solid #dde1e6;border-radius:5px;"></div>
<svg style="left:1163px;top:127px" width="10" height="10" viewBox="0 0 16 16"><path d="M8 9a1.5 1.5 0 1 0 0-3 1.5 1.5 0 0 0 0 3ZM1.5 9a1.5 1.5 0 1 0 0-3 1.5 1.5 0 0 0 0 3Zm13 0a1.5 1.5 0 1 0 0-3 1.5 1.5 0 0 0 0 3Z" fill="#59636e"/></svg>
<div class="a" style="left:211.5px;top:152.3px;width:967px;height:28.5px;background:#ffffff;border:1px solid #dde1e6;border-radius:5px;"></div>
<div class="a" style="left:220px;top:161px;width:12px;height:12px;border-radius:50%;overflow:hidden;background:#fbf7f3"><div class="a" style="left:2.40px;top:0.00px;width:2.70px;height:2.70px;background:#e2ad78"></div><div class="a" style="left:7.20px;top:0.00px;width:2.70px;height:2.70px;background:#e2ad78"></div><div class="a" style="left:0.00px;top:2.40px;width:2.70px;height:2.70px;background:#e2ad78"></div><div class="a" style="left:2.40px;top:2.40px;width:2.70px;height:2.70px;background:#e2ad78"></div><div class="a" style="left:4.80px;top:2.40px;width:2.70px;height:2.70px;background:#e2ad78"></div><div class="a" style="left:7.20px;top:2.40px;width:2.70px;height:2.70px;background:#e2ad78"></div><div class="a" style="left:9.60px;top:2.40px;width:2.70px;height:2.70px;background:#e2ad78"></div><div class="a" style="left:2.40px;top:4.80px;width:2.70px;height:2.70px;background:#e2ad78"></div><div class="a" style="left:4.80px;top:4.80px;width:2.70px;height:2.70px;background:#e2ad78"></div><div class="a" style="left:7.20px;top:4.80px;width:2.70px;height:2.70px;background:#e2ad78"></div><div class="a" style="left:0.00px;top:7.20px;width:2.70px;height:2.70px;background:#e2ad78"></div><div class="a" style="left:2.40px;top:7.20px;width:2.70px;height:2.70px;background:#e2ad78"></div><div class="a" style="left:7.20px;top:7.20px;width:2.70px;height:2.70px;background:#e2ad78"></div><div class="a" style="left:9.60px;top:7.20px;width:2.70px;height:2.70px;background:#e2ad78"></div><div class="a" style="left:0.00px;top:9.60px;width:2.70px;height:2.70px;background:#e2ad78"></div><div class="a" style="left:2.40px;top:9.60px;width:2.70px;height:2.70px;background:#e2ad78"></div><div class="a" style="left:7.20px;top:9.60px;width:2.70px;height:2.70px;background:#e2ad78"></div><div class="a" style="left:9.60px;top:9.60px;width:2.70px;height:2.70px;background:#e2ad78"></div></div>
<div class="t" style="left:237.5px;top:162.53px;font-size:9.3px;font-weight:bold;color:#1f2328;letter-spacing:0.000px;font-family:'Liberation Sans';transform:scaleX(0.8858);transform-origin:0 0;">ruman1990</div>
<div class="t" style="left:287px;top:162.53px;font-size:9.3px;font-weight:normal;color:#6e7781;letter-spacing:0.000px;font-family:'Liberation Sans';transform:scaleX(0.9518);transform-origin:0 0;">pythonII</div>
<div class="t" style="left:1039px;top:163.04px;font-size:8.7px;font-weight:normal;color:#6e7781;letter-spacing:0.000px;font-family:'Liberation Sans';transform:scaleX(0.8547);transform-origin:0 0;">d035392 · 7 months ago</div>
<svg style="left:1129.5px;top:161.5px" width="10.5" height="10.5" viewBox="0 0 16 16"><path d="m.427 1.927 1.215 1.215a8.002 8.002 0 1 1-1.6 5.685.75.75 0 1 1 1.493-.154 6.5 6.5 0 1 0 1.18-4.458l1.358 1.358A.25.25 0 0 1 3.896 6H.25A.25.25 0 0 1 0 5.75V2.104a.25.25 0 0 1 .427-.177ZM7.75 4a.75.75 0 0 1 .75.75v2.992l2.028.812a.75.75 0 0 1-.557 1.392l-2.5-1A.751.751 0 0 1 7 8.25v-3.5A.75.75 0 0 1 7.75 4Z" fill="#59636e"/></svg>
<div class="t" style="left:1142.5px;top:162.53px;font-size:9.3px;font-weight:bold;color:#1f2328;letter-spacing:0.000px;font-family:'Liberation Sans';transform:scaleX(0.7805);transform-origin:0 0;">History</div>
<div class="a" style="left:211.5px;top:191.3px;width:967.5px;height:470px;background:#ffffff;border:1px solid #dde1e6;border-radius:5px;"></div>
<div class="a" style="left:212.5px;top:192.3px;width:965.5px;height:27px;background:#f6f8fa;border-bottom:1px solid #dde1e6;border-radius:4px 4px 0 0"></div>
<div class="a" style="left:217.2px;top:197.3px;width:124.8px;height:17px;background:#e6eaef;border-radius:5px;"></div>
<div class="a" style="left:218px;top:198px;width:45.5px;height:15.5px;background:#ffffff;border:1px solid #dde3e8;border-radius:5px;"></div>
<div class="t" style="left:225px;top:201.17px;font-size:9.6px;font-weight:bold;color:#1f2328;letter-spacing:0.000px;font-family:'Liberation Sans';transform:scaleX(0.8544);transform-origin:0 0;">Preview</div>
<div class="t" style="left:273px;top:201.17px;font-size:9.6px;font-weight:normal;color:#1f2328;letter-spacing:0.000px;font-family:'Liberation Sans';transform:scaleX(0.8719);transform-origin:0 0;">Code</div>
<div class="t" style="left:311px;top:201.17px;font-size:9.6px;font-weight:normal;color:#1f2328;letter-spacing:0.000px;font-family:'Liberation Sans';transform:scaleX(0.8455);transform-origin:0 0;">Blame</div>
<div class="a" style="left:302.2px;top:203px;width:1px;height:9px;background:#d5dbe1;"></div>
<div class="t" style="left:348.5px;top:203.01px;font-size:6.9px;font-weight:normal;color:#59636e;letter-spacing:-0.006px;font-family:'Liberation Mono';">126 lines (89 loc) · 2.7 KB</div>
<div class="a" style="left:980.8px;top:197.6px;width:16.7px;height:16px;background:#f6f8fa;border:1px solid #dde1e6;border-radius:5px;"></div>
<div class="a" style="left:1002.9px;top:197.6px;width:15.9px;height:16px;background:#f6f8fa;border:1px solid #dde1e6;border-radius:5px;"></div>
<div class="a" style="left:1025.4px;top:197.6px;width:16.6px;height:16px;background:#f6f8fa;border:1px solid #dde1e6;border-radius:5px;"></div>
<div class="a" style="left:1048.3px;top:197.6px;width:57.1px;height:16px;background:#f6f8fa;border:1px solid #dde1e6;border-radius:5px;"></div>
<div class="a" style="left:1112px;top:197.6px;width:33px;height:16px;background:#f6f8fa;border:1px solid #dde1e6;border-radius:5px;"></div>
<div class="a" style="left:1073px;top:198.2px;width:1px;height:15px;background:#d1d9e0;"></div>
<div class="a" style="left:1090px;top:198.2px;width:1px;height:15px;background:#d1d9e0;"></div>
<div class="a" style="left:1128.3px;top:198.2px;width:1px;height:15px;background:#d1d9e0;"></div>
<svg style="left:984px;top:200.9px" width="10" height="9" viewBox="0 0 16 14.5"><path d="M8.5 13.5H1.9A1.15 1.15 0 0 1 0.75 12.35V1.9A1.15 1.15 0 0 1 1.9 0.75H5.2L6.8 2.6H14A1.15 1.15 0 0 1 15.25 3.75V7.5" stroke="#59636e" stroke-width="1.5" fill="none"/><path d="M12.5 8.5L13.4 10.6L15.5 11.5L13.4 12.4L12.5 14.5L11.6 12.4L9.5 11.5L11.6 10.6Z" fill="#59636e"/></svg>
<svg style="left:1006px;top:200.8px" width="10" height="10" viewBox="0 0 16 16"><path d="M7.998 15.035c-4.562 0-7.873-2.914-7.998-3.749V9.338c.085-.628.677-1.686 1.588-2.065.013-.07.024-.143.036-.218.029-.183.06-.384.126-.612-.201-.508-.254-1.084-.254-1.656 0-.87.128-1.769.693-2.484.579-.733 1.494-1.124 2.724-1.261 1.206-.134 2.262.034 2.944.765.05.053.096.108.139.165.044-.057.094-.112.143-.165.682-.731 1.738-.899 2.944-.765 1.23.137 2.145.528 2.724 1.261.566.715.693 1.614.693 2.484 0 .572-.053 1.148-.254 1.656.066.228.098.429.126.612.012.076.024.148.037.218.924.385 1.522 1.471 1.591 2.095v1.872c0 .766-3.351 3.795-8.002 3.795Zm0-1.485c2.28 0 4.584-1.11 5.002-1.433V7.862l-.023-.116c-.49.21-1.075.291-1.727.291-1.146 0-2.059-.327-2.71-.991A3.222 3.222 0 0 1 8 6.303a3.24 3.24 0 0 1-.544.743c-.65.664-1.563.991-2.71.991-.652 0-1.236-.081-1.727-.291l-.023.116v4.255c.419.323 2.722 1.433 5.002 1.433ZM6.762 2.83c-.193-.206-.637-.413-1.682-.297-1.019.113-1.479.404-1.713.7-.247.312-.369.789-.369 1.554 0 .793.129 1.171.308 1.371.162.181.519.379 1.442.379.853 0 1.339-.235 1.638-.54.315-.322.527-.827.617-1.553.117-.935-.037-1.395-.241-1.614Zm4.155-.297c-1.044-.116-1.488.091-1.681.297-.204.219-.359.679-.242 1.614.091.726.303 1.231.618 1.553.299.305.784.54 1.638.54.922 0 1.28-.198 1.442-.379.179-.2.308-.578.308-1.371 0-.765-.123-1.242-.37-1.554-.233-.296-.693-.587-1.713-.7ZM6.25 9.037a.75.75 0 0 1 .75.75v1.501a.75.75 0 0 1-1.5 0V9.787a.75.75 0 0 1 .75-.75Zm4.25.75v1.501a.75.75 0 0 1-1.5 0V9.787a.75.75 0 0 1 1.5 0Z" fill="#59636e"/></svg>
<svg style="left:1028.2px;top:199.5px" width="12" height="12" viewBox="0 0 12 11"><path d="M3.2 9.3C1.6 9.3 0.8 8.1 0.8 6.9C0.8 5.5 1.8 4.5 3 4.4C3.4 2.6 4.8 1.5 6.4 1.5C8.2 1.5 9.4 2.7 9.8 4.3C10.9 4.4 11.6 5.3 11.6 6.5" stroke="#59636e" stroke-width="1.15" fill="none" stroke-linecap="round"/><path d="M5.3 6.6L6.7 8L5.3 9.4" stroke="#59636e" stroke-width="1.15" fill="none" stroke-linecap="round" stroke-linejoin="round"/><path d="M8.4 9.4H10.6" stroke="#59636e" stroke-width="1.15" stroke-linecap="round"/></svg>
<div class="t" style="left:1053.75px;top:200.53px;font-size:9.3px;font-weight:bold;color:#1f2328;letter-spacing:0.000px;font-family:'Liberation Sans';transform:scaleX(0.7190);transform-origin:0 0;">Raw</div>
<svg style="left:1076.3px;top:200.3px" width="10.7" height="10.7" viewBox="0 0 16 16"><path d="M0 6.75C0 5.784.784 5 1.75 5h1.5a.75.75 0 0 1 0 1.5h-1.5a.25.25 0 0 0-.25.25v7.5c0 .138.112.25.25.25h7.5a.25.25 0 0 0 .25-.25v-1.5a.75.75 0 0 1 1.5 0v1.5A1.75 1.75 0 0 1 9.25 16h-7.5A1.75 1.75 0 0 1 0 14.25ZM5 1.75C5 .784 5.784 0 6.75 0h7.5C15.216 0 16 .784 16 1.75v7.5A1.75 1.75 0 0 1 14.25 11h-7.5A1.75 1.75 0 0 1 5 9.25Zm1.75-.25a.25.25 0 0 0-.25.25v7.5c0 .138.112.25.25.25h7.5a.25.25 0 0 0 .25-.25v-7.5a.25.25 0 0 0-.25-.25Z" fill="#59636e"/></svg>
<svg style="left:1093.6px;top:200.2px" width="10" height="10" viewBox="0 0 16 16"><path d="M2.75 14A1.75 1.75 0 0 1 1 12.25v-2.5a.75.75 0 0 1 1.5 0v2.5c0 .138.112.25.25.25h10.5a.25.25 0 0 0 .25-.25v-2.5a.75.75 0 0 1 1.5 0v2.5A1.75 1.75 0 0 1 13.25 14ZM7.25 7.689V2a.75.75 0 0 1 1.5 0v5.689l1.97-1.969a.749.749 0 1 1 1.06 1.06l-3.25 3.25a.749.749 0 0 1-1.06 0L4.22 6.78a.749.749 0 1 1 1.06-1.06l1.97 1.969Z" fill="#59636e"/></svg>
<svg style="left:1115.4px;top:200.3px" width="10.5" height="10.5" viewBox="0 0 16 16"><path d="M11.013 1.427a1.75 1.75 0 0 1 2.474 0l1.086 1.086a1.75 1.75 0 0 1 0 2.474l-8.61 8.61c-.21.21-.47.364-.756.445l-3.251.93a.75.75 0 0 1-.927-.928l.929-3.25c.081-.286.235-.547.445-.758l8.61-8.61Zm.176 4.823L9.75 4.81l-6.286 6.287a.253.253 0 0 0-.064.108l-.558 1.953 1.953-.558a.253.253 0 0 0 .108-.064Zm1.238-3.763a.25.25 0 0 0-.354 0L10.811 3.75l1.439 1.44 1.263-1.263a.25.25 0 0 0 0-.354Z" fill="#59636e"/></svg>
<svg style="left:1132.8px;top:200.5px" width="10" height="10" viewBox="0 0 16 16"><path d="m4.427 7.427 3.396 3.396a.25.25 0 0 0 .354 0l3.396-3.396A.25.25 0 0 0 11.396 7H4.604a.25.25 0 0 0-.177.427Z" fill="#59636e"/></svg>
<svg style="left:1154.2px;top:199.8px" width="10.3" height="10.3" viewBox="0 0 16 16"><path d="M5.75 2.5h8.5a.75.75 0 0 1 0 1.5h-8.5a.75.75 0 0 1 0-1.5Zm0 5h8.5a.75.75 0 0 1 0 1.5h-8.5a.75.75 0 0 1 0-1.5Zm0 5h8.5a.75.75 0 0 1 0 1.5h-8.5a.75.75 0 0 1 0-1.5ZM2 14a1 1 0 1 1 0-2 1 1 0 0 1 0 2Zm1-6a1 1 0 1 1-2 0 1 1 0 0 1 2 0ZM2 4a1 1 0 1 1 0-2 1 1 0 0 1 0 2Z" fill="#59636e"/></svg>
<div class="t" style="left:378.75px;top:244.06px;font-size:19.3px;font-weight:normal;color:#1f2328;letter-spacing:0.424px;font-family:'Liberation Sans';-webkit-text-stroke:0.5px #1f2328;">Python – Dedičnosť (Inheritance)</div>
<div class="a" style="left:378px;top:271px;width:634px;height:1px;background:#e1e5e9;"></div>
<div class="t" style="left:378.5px;top:285.18px;font-size:10.3px;font-weight:normal;color:#1f2328;letter-spacing:0.000px;font-family:'Liberation Sans';transform:scaleX(0.9523);transform-origin:0 0;">Dedičnosť nám umožňuje definovať triedu, ktorá <b>dedi všetky metódy a vlastnosti</b> z inej triedy. <b>Rodičovská trieda</b> (parent class) je tá, od ktorej</div>
<div class="t" style="left:378.5px;top:299.73px;font-size:10.3px;font-weight:normal;color:#1f2328;letter-spacing:0.000px;font-family:'Liberation Sans';transform:scaleX(0.9338);transform-origin:0 0;">dedíme, nazývaná aj <b>základná trieda</b> (base class). <b>Potomkovská trieda</b> (child class) je tá, ktorá dedí, nazývaná aj <b>odvodená trieda</b> (derived</div>
<div class="t" style="left:378.5px;top:314.28px;font-size:10.3px;font-weight:normal;color:#1f2328;letter-spacing:0.000px;font-family:'Liberation Sans';transform:scaleX(0.8504);transform-origin:0 0;">class).</div>
<div class="a" style="left:378px;top:342.2px;width:634px;height:3px;background:#d1d9e0;"></div>
<div class="t" style="left:378.5px;top:363.15px;font-size:14px;font-weight:normal;color:#1f2328;letter-spacing:0.649px;font-family:'Liberation Sans';-webkit-text-stroke:0.35px #1f2328;">Vytvorenie rodičovskej triedy</div>
<div class="a" style="left:378px;top:383px;width:634px;height:1px;background:#e1e5e9;"></div>
<div class="t" style="left:378.75px;top:396.84px;font-size:10px;font-weight:normal;color:#1f2328;letter-spacing:0.000px;font-family:'Liberation Sans';transform:scaleX(0.9974);transform-origin:0 0;">Každá trieda môže byť rodičovskou triedou:</div>
<div class="a" style="left:378px;top:418.7px;width:634px;height:155.8px;background:#f6f8fa;border-radius:2px;"></div>
<svg style="left:992px;top:427px" width="10" height="10" viewBox="0 0 16 16"><path d="M0 6.75C0 5.784.784 5 1.75 5h1.5a.75.75 0 0 1 0 1.5h-1.5a.25.25 0 0 0-.25.25v7.5c0 .138.112.25.25.25h7.5a.25.25 0 0 0 .25-.25v-1.5a.75.75 0 0 1 1.5 0v1.5A1.75 1.75 0 0 1 9.25 16h-7.5A1.75 1.75 0 0 1 0 14.25ZM5 1.75C5 .784 5.784 0 6.75 0h7.5C15.216 0 16 .784 16 1.75v7.5A1.75 1.75 0 0 1 14.25 11h-7.5A1.75 1.75 0 0 1 5 9.25Zm1.75-.25a.25.25 0 0 0-.25.25v7.5c0 .138.112.25.25.25h7.5a.25.25 0 0 0 .25-.25v-7.5a.25.25 0 0 0-.25-.25Z" fill="#59636e"/></svg>
<div class="t" style="left:387.7px;top:430.96px;font-size:8.4px;font-weight:normal;color:#1f2328;letter-spacing:-0.400px;font-family:'Liberation Mono';white-space:pre;"><span style="color:#cf222e">class</span> <span style="color:#953800">Person</span>:</div>
<div class="t" style="left:387.7px;top:443.33px;font-size:8.4px;font-weight:normal;color:#1f2328;letter-spacing:-0.400px;font-family:'Liberation Mono';white-space:pre;">    <span style="color:#cf222e">def</span> <span style="color:#8250df">__init__</span>(self, fname, lname):</div>
<div class="t" style="left:387.7px;top:455.70px;font-size:8.4px;font-weight:normal;color:#1f2328;letter-spacing:-0.400px;font-family:'Liberation Mono';white-space:pre;">        self.<span style="color:#0550ae">firstname</span> <span style="color:#0550ae">=</span> fname</div>
<div class="t" style="left:387.7px;top:468.07px;font-size:8.4px;font-weight:normal;color:#1f2328;letter-spacing:-0.400px;font-family:'Liberation Mono';white-space:pre;">        self.<span style="color:#0550ae">lastname</span> <span style="color:#0550ae">=</span> lname</div>
<div class="t" style="left:387.7px;top:492.81px;font-size:8.4px;font-weight:normal;color:#1f2328;letter-spacing:-0.400px;font-family:'Liberation Mono';white-space:pre;">    <span style="color:#cf222e">def</span> <span style="color:#8250df">printname</span>(self):</div>
<div class="t" style="left:387.7px;top:505.18px;font-size:8.4px;font-weight:normal;color:#1f2328;letter-spacing:-0.400px;font-family:'Liberation Mono';white-space:pre;">        <span style="color:#8250df">print</span>(self.<span style="color:#0550ae">firstname</span>, self.<span style="color:#0550ae">lastname</span>)</div>
<div class="t" style="left:387.7px;top:529.92px;font-size:8.4px;font-weight:normal;color:#1f2328;letter-spacing:-0.400px;font-family:'Liberation Mono';white-space:pre;"><span style="color:#59636e"># Vytvorenie objektu triedy Person a volanie metódy:</span></div>
<div class="t" style="left:387.7px;top:542.29px;font-size:8.4px;font-weight:normal;color:#1f2328;letter-spacing:-0.400px;font-family:'Liberation Mono';white-space:pre;">x <span style="color:#0550ae">=</span> <span style="color:#8250df">Person</span>(<span style="color:#0a3069">"John"</span>, <span style="color:#0a3069">"Doe"</span>)</div>
<div class="t" style="left:387.7px;top:554.66px;font-size:8.4px;font-weight:normal;color:#1f2328;letter-spacing:-0.400px;font-family:'Liberation Mono';white-space:pre;">x.<span style="color:#8250df">printname</span>()</div>
<div class="a" style="left:378px;top:589.6px;width:634px;height:2.8px;background:#d1d9e0;"></div>
<div class="t" style="left:378.5px;top:611.95px;font-size:14px;font-weight:normal;color:#1f2328;letter-spacing:0.813px;font-family:'Liberation Sans';-webkit-text-stroke:0.35px #1f2328;">Vytvorenie potomkovej triedy</div>
<div class="a" style="left:378px;top:630.5px;width:634px;height:1px;background:#e1e5e9;"></div>
<div class="a" style="left:1187px;top:50px;width:13px;height:593px;background:#fbfbfb;"></div>
<div class="a" style="left:1198.5px;top:50px;width:1px;height:593px;background:#e4e4e4;"></div>
<div class="a" style="left:1190.5px;top:60.5px;width:6px;height:186.5px;background:#8a8a8a;border-radius:3px"></div>
<svg style="left:1191px;top:53px" width="5" height="4"><path d="M0 4H5L2.5 0Z" fill="#8a8a8a"/></svg>
<svg style="left:1191px;top:635.5px" width="5" height="4"><path d="M0 0H5L2.5 4Z" fill="#8a8a8a"/></svg>
</body></html>
